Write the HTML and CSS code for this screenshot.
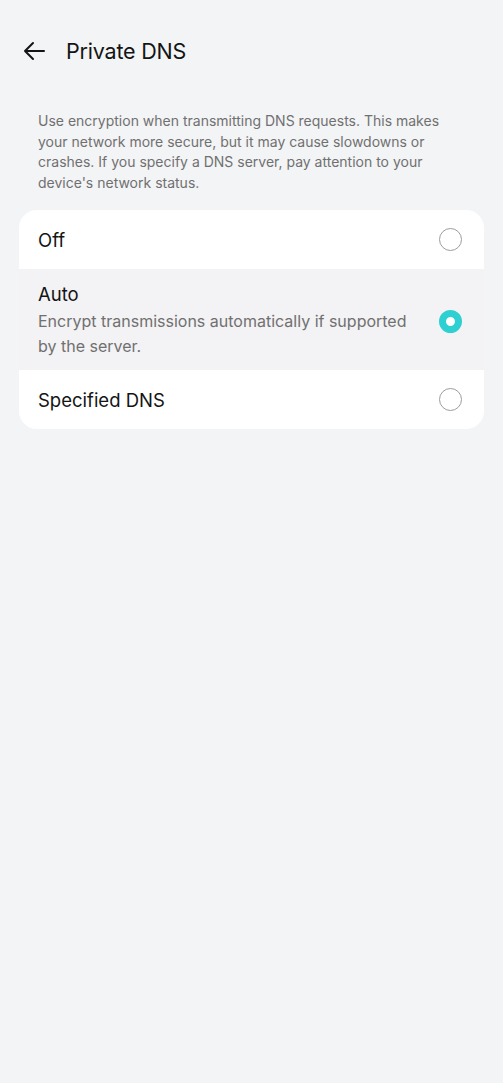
FILE: index.html
```html
<!DOCTYPE html>
<html lang="en">
<head>
  <meta charset="UTF-8" />
  <meta name="viewport" content="width=device-width, initial-scale=1.0"/>
  <title>Private DNS</title>
  <link rel="stylesheet" href="styles.css">
</head>
<body>
  <header class="top-bar">
    <svg class="back-icon" width="24" height="24" viewBox="0 0 24 24">
      <path d="M22 12H3M11 4L3 12L11 20"/>
    </svg>
    <h1>Private DNS</h1>
  </header>

  <p class="intro">
    Use encryption when transmitting DNS requests. This makes your network more secure, but it may cause slowdowns or crashes. If you specify a DNS server, pay attention to your device's network status.
  </p>

  <div class="option-card">
    <div class="option">
      <div class="option-text">
        <div class="option-title">Off</div>
      </div>
      <span class="radio"></span>
    </div>
    <div class="option selected">
      <div class="option-text">
        <div class="option-title">Auto</div>
        <div class="option-sub">Encrypt transmissions automatically if supported by the server.</div>
      </div>
      <span class="radio checked"></span>
    </div>
    <div class="option">
      <div class="option-text">
        <div class="option-title">Specified DNS</div>
      </div>
      <span class="radio"></span>
    </div>
  </div>
</body>
</html>
```

FILE: styles.css
```css
:root {
  --bg-color: #f3f4f6;
  --card-color: #ffffff;
  --highlight-color: #f3f2f4;
  --text-color: #141414;
  --muted-color: #707070;
  --accent-color: #2fd0d2;
}

* {
  box-sizing: border-box;
}

body {
  background-color: var(--bg-color);
  color: var(--text-color);
  font-family: Inter, "Noto Sans", sans-serif;
  margin: 0;
  padding: 0 19px;
  min-height: 100vh;
}

.top-bar {
  display: flex;
  align-items: center;
  gap: 20px;
  height: 102px;
  padding: 0 0 0 3px;
}

.back-icon {
  fill: none;
  stroke: var(--text-color);
  stroke-width: 2;
  stroke-linecap: round;
  stroke-linejoin: round;
}

h1 {
  margin: 0;
  font-size: 21.5px;
  font-weight: 400;
  letter-spacing: -0.2px;
}

.intro {
  margin: 9px 0 17px;
  padding: 0 19px;
  color: var(--muted-color);
  font-size: 14px;
  line-height: 20.6px;
}

.option-card {
  background-color: var(--card-color);
  border-radius: 18px;
  overflow: hidden;
}

.option {
  display: flex;
  align-items: center;
  justify-content: space-between;
  padding: 0 22px 0 19px;
  min-height: 59px;
}

.option.selected {
  background-color: var(--highlight-color);
  padding-top: 14px;
  padding-bottom: 11px;
}

.option-title {
  font-size: 18.5px;
}

.option-sub {
  margin-top: 4px;
  color: var(--muted-color);
  font-size: 16px;
  line-height: 25px;
  max-width: 380px;
}

.radio {
  flex-shrink: 0;
  width: 23px;
  height: 23px;
  border-radius: 50%;
  border: 1.6px solid #9c9c9c;
}

.radio.checked {
  border: 7.5px solid var(--accent-color);
  background-color: #ffffff;
}
```
